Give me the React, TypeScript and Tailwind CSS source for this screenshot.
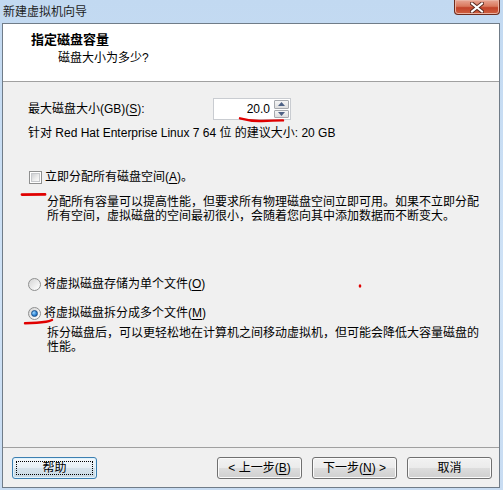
import type { ReactNode } from "react";

const winFont = "font-[family-name:'Liberation_Sans','Noto_Sans_CJK_SC',sans-serif]";

function Key({ children }: { children: ReactNode }) {
  return <span className="underline underline-offset-[2px] decoration-1">{children}</span>;
}

function CheckBox() {
  return (
    <div className="flex h-[13px] w-[13px] items-center justify-center border border-[#8e8f8f] bg-white">
      <div className="h-[9px] w-[9px] border border-[#c7c9cc] bg-[linear-gradient(135deg,#cfd1d4_0%,#eeeeee_60%,#fafafa_100%)]" />
    </div>
  );
}

function Radio({ checked }: { checked?: boolean }) {
  return (
    <div className="flex h-[13px] w-[13px] items-center justify-center rounded-full border border-[#8e8f8f] bg-[linear-gradient(135deg,#d4d4d4_0%,#f4f4f4_70%,#ffffff_100%)]">
      {checked && (
        <div className="h-[7px] w-[7px] rounded-full border border-[#1a4f8a] bg-[radial-gradient(circle_at_35%_35%,#9fd8ff_0%,#2f86d6_55%,#0f4c95_100%)]" />
      )}
    </div>
  );
}

function WinButton({ children, focused }: { children: ReactNode; focused?: boolean }) {
  return (
    <button
      type="button"
      className={
        focused
          ? "relative flex h-[22px] w-[85px] items-center justify-center rounded-[3px] border border-[#3c7fb1] bg-[linear-gradient(to_bottom,#f4f9fc_0%,#e6eff5_50%,#d6e3ec_51%,#c9d9e4_100%)] text-[12px] text-black shadow-[inset_0_0_0_1px_#dff2fc]"
          : "flex h-[22px] w-[85px] items-center justify-center rounded-[3px] border border-[#707070] bg-[linear-gradient(to_bottom,#f2f2f2_0%,#ebebeb_50%,#dddddd_51%,#cfcfcf_100%)] text-[12px] text-black shadow-[inset_0_0_0_1px_#fbfbfb]"
      }
    >
      {focused && <span className="absolute inset-[3px] border border-dotted border-black" />}
      <span className="relative leading-[14px]">{children}</span>
    </button>
  );
}

export default function App() {
  return (
    <div className={`relative flex h-[490px] w-[503px] flex-col bg-[linear-gradient(to_bottom,#c2d9f1_0%,#cfe2f6_60%,#c8dcf2_100%)] pb-[2px] pl-[2px] pr-[3px] text-black ${winFont}`}>
      {/* title bar */}
      <div className="flex h-[23px] items-start justify-between">
        <span className="pl-[1px] pt-[4px] text-[12px] leading-[16px] text-[#1e1e1e]">新建虚拟机向导</span>
        <div className="flex h-[15px] w-[46px] items-center justify-center rounded-b-[4px] border border-t-0 border-[#6d2b1c] bg-[linear-gradient(to_bottom,#e8a694_0%,#d9785d_45%,#c2432a_55%,#d0603f_100%)] shadow-[inset_0_0_0_1px_#eab3a3]">
          <svg width="14" height="11" viewBox="0 0 14 11">
            <path d="M2 1.5 L12 9.5 M12 1.5 L2 9.5" stroke="#5a2a20" strokeWidth="4" strokeLinecap="square" />
            <path d="M2 1.5 L12 9.5 M12 1.5 L2 9.5" stroke="#ffffff" strokeWidth="2" strokeLinecap="square" />
          </svg>
        </div>
      </div>

      {/* client area */}
      <div className="flex h-[465px] flex-col border border-[#707c88] bg-[#f0f0f0]">
        <div className="h-[58px] border-b border-[#a0a0a0] bg-white pl-[28px] pt-[8px]">
          <div className="text-[13px] font-bold leading-[16px]">指定磁盘容量</div>
          <div className="mt-[2px] pl-[27px] text-[12px] leading-[16px]">磁盘大小为多少?</div>
        </div>

        <div className="flex flex-1 flex-col text-[12px] leading-[14px]">
          <div className="mt-[16px] flex h-[22px] items-center pl-[25px]">
            <span className="w-[185px]">
              最大磁盘大小(GB)(<Key>S</Key>):
            </span>
            <div className="flex h-[22px] w-[78px] border border-[#c9ccd1] bg-white">
              <div className="flex flex-1 items-center justify-end pr-[4px] text-[12px]">20.0</div>
              <div className="flex w-[16px] flex-col gap-[1px] py-[1px] pr-[1px]">
                <div className="flex flex-1 items-center justify-center rounded-[1px] border border-[#a6a9ae] bg-[linear-gradient(to_bottom,#f6f6f6,#dedede)]">
                  <svg width="7" height="4" viewBox="0 0 7 4"><path d="M0 4 L3.5 0 L7 4 Z" fill="#4d6185" /></svg>
                </div>
                <div className="flex flex-1 items-center justify-center rounded-[1px] border border-[#a6a9ae] bg-[linear-gradient(to_bottom,#f6f6f6,#dedede)]">
                  <svg width="7" height="4" viewBox="0 0 7 4"><path d="M0 0 L7 0 L3.5 4 Z" fill="#4d6185" /></svg>
                </div>
              </div>
            </div>
          </div>

          <div className="mt-[6px] pl-[25px]">针对 Red Hat Enterprise Linux 7 64 位 的建议大小: 20 GB</div>

          <div className="mt-[30px] flex items-center gap-[3px] pl-[26px]">
            <CheckBox />
            <span>
              立即分配所有磁盘空间(<Key>A</Key>)。
            </span>
          </div>
          <div className="mt-[11px] pl-[44px] pr-[16px]">
            分配所有容量可以提高性能，但要求所有物理磁盘空间立即可用。如果不立即分配所有空间，虚拟磁盘的空间最初很小，会随着您向其中添加数据而不断变大。
          </div>

          <div className="mt-[54px] flex items-center gap-[3px] pl-[25px]">
            <Radio />
            <span>
              将虚拟磁盘存储为单个文件(<Key>O</Key>)
            </span>
          </div>
          <div className="mt-[15px] flex items-center gap-[3px] pl-[25px]">
            <Radio checked />
            <span>
              将虚拟磁盘拆分成多个文件(<Key>M</Key>)
            </span>
          </div>
          <div className="mt-[6px] pl-[44px] pr-[16px]">
            拆分磁盘后，可以更轻松地在计算机之间移动虚拟机，但可能会降低大容量磁盘的性能。
          </div>
        </div>

        <div className="flex h-[40px] items-start border-t border-[#a0a0a0] pt-[9px]">
          <div className="ml-[9px]">
            <WinButton focused>帮助</WinButton>
          </div>
          <div className="ml-auto mr-[7px] flex gap-[10px]">
            <WinButton>
              &lt; 上一步(<Key>B</Key>)
            </WinButton>
            <WinButton>
              下一步(<Key>N</Key>) &gt;
            </WinButton>
            <WinButton>取消</WinButton>
          </div>
        </div>
      </div>

      {/* red hand-drawn marks */}
      <svg className="pointer-events-none absolute left-0 top-0" width="503" height="490" viewBox="0 0 503 490">
        <path d="M240 118.3 Q252 121.5 262 121 T283 120.4" stroke="#e00000" strokeWidth="2.4" fill="none" strokeLinecap="round" />
        <path d="M22 194.6 L45 194.4" stroke="#e00000" strokeWidth="2.8" fill="none" strokeLinecap="round" />
        <ellipse cx="360" cy="286" rx="1.3" ry="1.8" fill="#e00000" />
        <path d="M25 323.2 Q38 323 46 321.8 Q49 321.3 52 320" stroke="#e00000" strokeWidth="2.4" fill="none" strokeLinecap="round" />
      </svg>
    </div>
  );
}
